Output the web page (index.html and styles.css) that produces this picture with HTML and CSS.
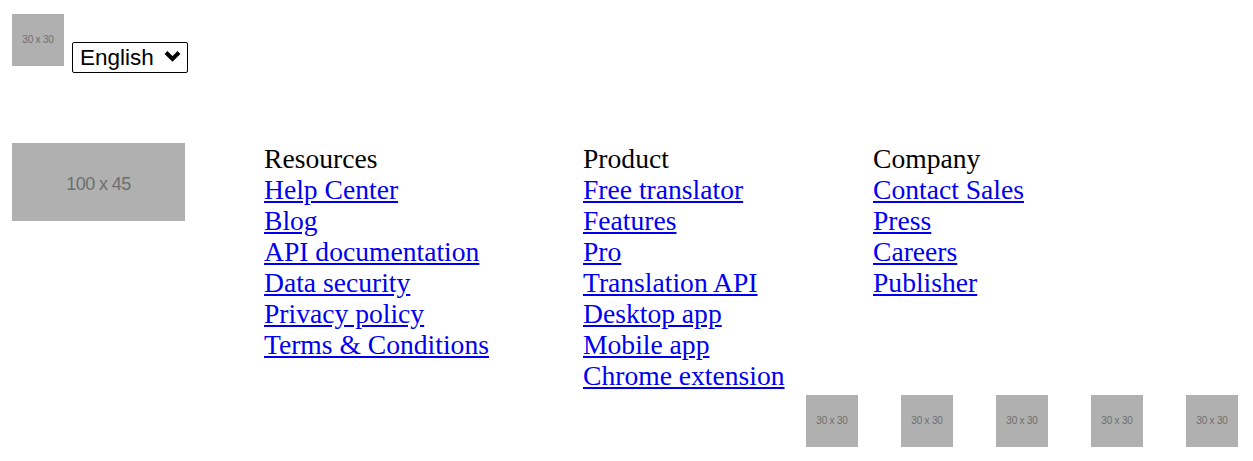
FILE: index.html
```html
<!DOCTYPE html>
<html lang="en">
<head>
<meta charset="utf-8">
<title>Footer</title>
<link rel="stylesheet" href="styles.css">
</head>
<body>
<header class="top">
  <div class="ph ph-sm">30 x 30</div>
  <div class="lang-wrap">
    <select class="lang">
      <option>English</option>
    </select>
    <svg class="chev" width="17" height="12" viewBox="0 0 17 12" aria-hidden="true">
      <path d="M2 2.5 L8.5 9 L15 2.5" fill="none" stroke="#000" stroke-width="4" stroke-linecap="butt" stroke-linejoin="miter"/>
    </svg>
  </div>
</header>
<footer class="foot">
  <div class="foot-logo"><div class="ph ph-logo">100 x 45</div></div>
  <div class="col col-res">
    <div class="col-title">Resources</div>
    <a href="#">Help Center</a>
    <a href="#">Blog</a>
    <a href="#">API documentation</a>
    <a href="#">Data security</a>
    <a href="#">Privacy policy</a>
    <a href="#">Terms &amp; Conditions</a>
  </div>
  <div class="col col-prod">
    <div class="col-title">Product</div>
    <a href="#">Free translator</a>
    <a href="#">Features</a>
    <a href="#">Pro</a>
    <a href="#">Translation API</a>
    <a href="#">Desktop app</a>
    <a href="#">Mobile app</a>
    <a href="#">Chrome extension</a>
  </div>
  <div class="col col-comp">
    <div class="col-title">Company</div>
    <a href="#">Contact Sales</a>
    <a href="#">Press</a>
    <a href="#">Careers</a>
    <a href="#">Publisher</a>
  </div>
</footer>
<div class="social">
  <div class="ph ph-sm">30 x 30</div>
  <div class="ph ph-sm">30 x 30</div>
  <div class="ph ph-sm">30 x 30</div>
  <div class="ph ph-sm">30 x 30</div>
  <div class="ph ph-sm">30 x 30</div>
</div>
</body>
</html>
```
FILE: styles.css
```css
html, body {
  margin: 0;
  padding: 0;
  background: #ffffff;
}
body {
  font-family: "Liberation Serif", "Times New Roman", serif;
  font-size: 27.6px;
  line-height: 31px;
  color: #000000;
}
.ph {
  background: #b0b0b0;
  color: #6e6e6e;
  font-family: "Liberation Sans", Arial, sans-serif;
  display: flex;
  align-items: center;
  justify-content: center;
  box-sizing: border-box;
  flex: none;
}
.ph-sm {
  width: 52px;
  height: 52px;
  font-size: 10px;
  line-height: 1;
  letter-spacing: -0.2px;
}
.ph-logo {
  width: 173px;
  height: 78px;
  font-size: 18px;
  line-height: 1;
  letter-spacing: -0.6px;
  padding-top: 4px;
}
.top {
  display: flex;
  align-items: flex-start;
  padding: 14px 0 0 12px;
  height: 143px;
  box-sizing: border-box;
}
.lang-wrap {
  position: relative;
  margin: 28px 0 0 8px;
}
.lang {
  display: block;
  appearance: none;
  -webkit-appearance: none;
  -moz-appearance: none;
  font-family: "Liberation Sans", Arial, sans-serif;
  font-size: 22.5px;
  height: 31px;
  width: 116px;
  color: #000;
  background: #fff;
  border: 1px solid #000;
  border-radius: 2px;
  padding: 0 0 0 7px;
  margin: 0;
}
.chev {
  position: absolute;
  right: 7px;
  top: 8px;
  display: block;
  pointer-events: none;
}
.foot {
  display: grid;
  grid-template-columns: 252px 319px 290px auto;
  padding-left: 12px;
}
.col {
  display: flex;
  flex-direction: column;
  align-items: flex-start;
}
.col a {
  color: #0000ee;
  text-decoration: underline;
}
.social {
  display: flex;
  justify-content: flex-end;
  gap: 43px;
  padding: 4px 15px 0 0;
}
```
